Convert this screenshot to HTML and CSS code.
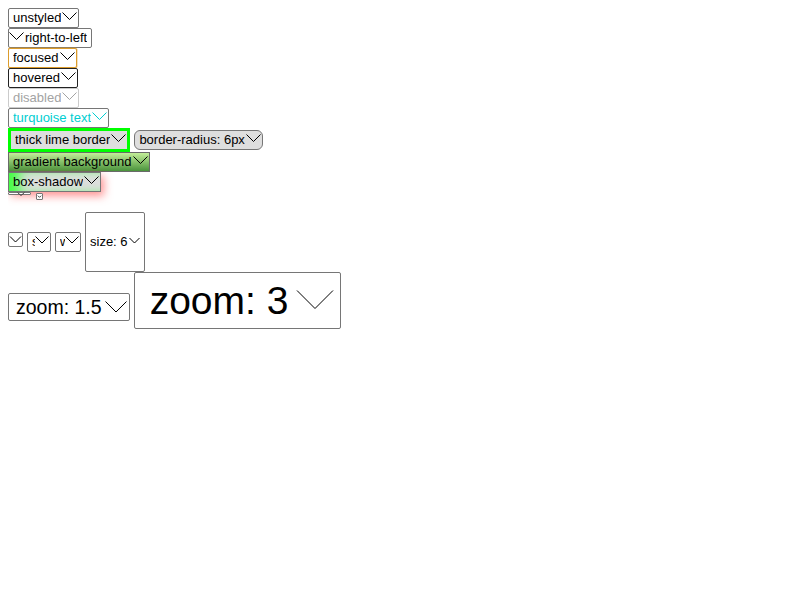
FILE: index.html
```html
<!DOCTYPE html>
<html>
<head>
<meta charset="utf-8">
<link rel="stylesheet" href="styles.css">
</head>
<body>
<div class="row"><span class="sel"><span class="label">unstyled</span><svg class="chev" viewBox="0 0 16 18"><polyline points="1.5,3.5 8.5,10.5 15.5,3.5"/></svg></span></div>
<div class="row"><span class="sel rtl" dir="rtl"><span class="label">right-to-left</span><svg class="chev" viewBox="0 0 16 18"><polyline points="0.5,3.5 7.5,10.5 14.5,3.5"/></svg></span></div>
<div class="row"><span class="sel focused"><span class="label">focused</span><svg class="chev" viewBox="0 0 16 18"><polyline points="1.5,3.5 8.5,10.5 15.5,3.5"/></svg></span></div>
<div class="row"><span class="sel hovered"><span class="label">hovered</span><svg class="chev" viewBox="0 0 16 18"><polyline points="1.5,3.5 8.5,10.5 15.5,3.5"/></svg></span></div>
<div class="row"><span class="sel disabled"><span class="label">disabled</span><svg class="chev" viewBox="0 0 16 18"><polyline points="1.5,3.5 8.5,10.5 15.5,3.5"/></svg></span></div>
<div class="row"><span class="sel turquoise"><span class="label">turquoise text</span><svg class="chev" viewBox="0 0 16 18"><polyline points="1.5,3.5 8.5,10.5 15.5,3.5"/></svg></span></div>
<div class="row"><span class="sel lime"><span class="label">thick lime border</span><svg class="chev" viewBox="0 0 16 18"><polyline points="1.5,3.5 8.5,10.5 15.5,3.5"/></svg></span><span class="sel rounded"><span class="label">border-radius: 6px</span><svg class="chev" viewBox="0 0 16 18"><polyline points="1.5,3.5 8.5,10.5 15.5,3.5"/></svg></span></div>
<div class="row"><span class="sel gradient"><span class="label">gradient background</span><svg class="chev" viewBox="0 0 16 18"><polyline points="1.5,3.5 8.5,10.5 15.5,3.5"/></svg></span></div>
<div class="row"><span class="sel shadow"><span class="label">box-shadow</span><svg class="chev" viewBox="0 0 16 18"><polyline points="1.5,3.5 8.5,10.5 15.5,3.5"/></svg></span></div>
<div class="row tiny-row"><span class="tiny-a"><svg class="tiny-a-chev" viewBox="0 0 8 4"><polyline points="0.5,0.5 4,3.5 7.5,0.5"/></svg></span><span class="tiny-b"><svg class="tiny-b-chev" viewBox="0 0 6 6"><polyline points="1,2 3,4 5,2"/></svg></span></div>
<div class="row"><span class="sel empty"><svg class="chev-small" viewBox="0 0 13 13"><polyline points="1,3.5 6.5,9 12,3.5"/></svg></span><span class="sel narrow w24"><span class="label">size: 1</span><svg class="chev-n" viewBox="0 0 14 18"><polyline points="0.5,3.5 7,10 13.5,3.5"/></svg></span><span class="sel narrow w26"><span class="label">width</span><svg class="chev-n" viewBox="0 0 14 18"><polyline points="0.5,3.5 7,10 13.5,3.5"/></svg></span><span class="sel square"><span class="label">size: 6</span><svg class="chev-sq" viewBox="0 0 13 18"><polyline points="1.5,5 6.5,10 11.5,5"/></svg></span></div>
<div class="row"><span class="sel big15"><span class="label">zoom: 1.5</span><svg class="chev15" viewBox="0 0 27 26"><polyline points="3.5,7.5 14,18 24.5,7.5"/></svg></span><span class="sel big3"><span class="label">zoom: 3</span><svg class="chev3" viewBox="0 0 52 55"><polyline points="9,17.5 27,35.5 45,17.5"/></svg></span></div>
</body>
</html>
```
FILE: styles.css
```css
body {
  margin: 8px;
  font-family: "Liberation Sans", Arial, sans-serif;
  font-size: 13px;
  color: #000;
  background: #fff;
}
.row {
  display: flex;
  align-items: baseline;
  gap: 4px;
}
.sel {
  display: inline-flex;
  align-items: center;
  box-sizing: border-box;
  border: 1px solid #767676;
  border-radius: 2px;
  background: #fff;
  padding-inline-start: 4px;
  padding-inline-end: 1px;
  line-height: 18px;
  white-space: nowrap;
  color: #000;
}
.label {
  overflow: hidden;
  min-width: 0;
  white-space: nowrap;
}
.chev, .chev-n, .chev-sq, .chev15, .chev3, .chev-small {
  flex-shrink: 0;
  fill: none;
  stroke: currentColor;
  stroke-width: 1;
}
.chev {
  width: 16px;
  height: 18px;
}
.rtl {
  padding-inline-end: 0;
}
.focused {
  border-color: #dc9c2c;
  box-shadow: 0 0 0 0.5px rgba(220, 156, 44, 0.6);
}
.hovered {
  border-color: #222;
}
.disabled {
  border-color: #cbcbcb;
  color: #a3a3a3;
}
.turquoise {
  color: #00ced1;
}
.lime {
  border: 3px solid #00ff00;
  border-radius: 0;
  background: #dedede;
}
.rounded {
  border-radius: 6px;
  background: #dedede;
}
.gradient {
  border-color: #6a6a6a;
  border-radius: 0;
  background: linear-gradient(#c2ee98, #4a933c);
}
.shadow {
  background: #dedede;
  border-radius: 0;
  box-shadow: inset 14px 0 12px -4px #44ff44, 3px 4px 9px rgba(255, 60, 60, 0.55);
}
.tiny-row {
  align-items: flex-start;
  height: 20px;
  gap: 5px;
}
.tiny-a {
  position: relative;
  display: block;
  box-sizing: border-box;
  width: 23px;
  height: 3px;
  border: 1px solid #767676;
  border-radius: 1px;
  background: #fff;
}
.tiny-a-chev {
  position: absolute;
  left: 8px;
  top: -1px;
  width: 8px;
  height: 4px;
  fill: none;
  stroke: #444;
  stroke-width: 1;
}
.tiny-b {
  display: flex;
  align-items: center;
  justify-content: center;
  box-sizing: border-box;
  width: 7px;
  height: 7px;
  margin-top: 1px;
  border: 1px solid #767676;
  border-radius: 1px;
  background: #fff;
}
.tiny-b-chev {
  width: 5px;
  height: 5px;
  fill: none;
  stroke: #222;
  stroke-width: 1;
}
.empty {
  width: 15px;
  height: 15px;
  padding: 0;
  justify-content: center;
}
.chev-small {
  width: 13px;
  height: 13px;
}
.chev-n {
  width: 14px;
  height: 18px;
}
.narrow .label {
  flex: 1 1 0;
}
.w24 {
  width: 24px;
}
.w26 {
  width: 26px;
}
.square {
  width: 60px;
  height: 60px;
}
.chev-sq {
  width: 13px;
  height: 18px;
}
.big15 {
  font-size: 19.5px;
  line-height: 26px;
  padding-inline-start: 7px;
  padding-inline-end: 0;
}
.chev15 {
  width: 27px;
  height: 26px;
}
.big3 {
  font-size: 39px;
  line-height: 55px;
  padding-inline-start: 15px;
  padding-inline-end: 0;
}
.chev3 {
  width: 52px;
  height: 55px;
}
```
